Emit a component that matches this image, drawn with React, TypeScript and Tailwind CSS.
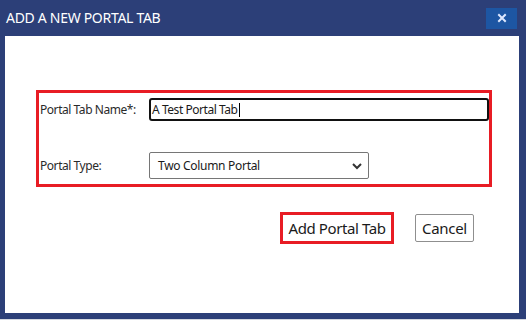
import React from "react";

export default function App() {
  const font = { fontFamily: '"Noto Sans", "Open Sans", sans-serif' };
  return (
    <div className="w-[526px] h-[320px] bg-[#2c3f78] flex flex-col overflow-hidden" style={font}>
      <div className="h-[36px] flex items-center justify-between pl-[6px] pr-[9px] shrink-0">
        <div className="text-white text-[14px] leading-none tracking-[-0.3px]">ADD A NEW PORTAL TAB</div>
        <button className="w-[31px] h-[21px] bg-[#1d56a3] flex items-center justify-center">
          <svg width="10" height="10" viewBox="0 0 10 10">
            <path d="M2 2 L8 8 M8 2 L2 8" stroke="#dfe9ff" strokeWidth="2" strokeLinecap="square" />
          </svg>
        </button>
      </div>
      <div className="flex-1 bg-white ml-[5px] mr-[7px] mb-[6px] flex flex-col pt-[54px]">
        <div className="ml-[31px] w-[456px] h-[97px] border-[3px] border-[#e81c24] pt-[5px] pb-[5px] flex flex-col justify-between">
          <div className="flex items-center h-[23px]">
            <div className="w-[110px] pl-[1px] text-[12px] text-[#2a2a2a] tracking-[-0.45px]">Portal Tab Name*:</div>
            <div className="flex-1 h-[23px] border-2 border-[#111] rounded-[3px] flex items-center pl-[1px]">
              <span className="text-[12px] text-[#1a1a1a] tracking-[-0.45px]">A Test Portal Tab</span>
              <span className="w-[1px] h-[14px] bg-black ml-[1px]" />
            </div>
          </div>
          <div className="flex items-center h-[27px]">
            <div className="w-[110px] pl-[1px] text-[12px] text-[#2a2a2a] tracking-[-0.45px]">Portal Type:</div>
            <div className="w-[220px] h-[27px] border border-[#767676] rounded-[2px] flex items-center justify-between pl-[8px] pr-[5px]">
              <span className="text-[12px] text-[#1a1a1a] tracking-[-0.3px]">Two Column Portal</span>
              <svg width="12" height="8" viewBox="0 0 12 8">
                <path d="M2 2 L6 6 L10 2" stroke="#333" strokeWidth="2" fill="none" />
              </svg>
            </div>
          </div>
        </div>
        <div className="flex items-center justify-end mt-[25px] mr-[45px] gap-[21px]">
          <div className="w-[114px] h-[32px] border-[3px] border-[#e81c24] flex items-center justify-center">
            <span className="text-[15px] text-[#1a1a1a] tracking-[-0.4px]">Add Portal Tab</span>
          </div>
          <div className="w-[59px] h-[28px] border border-[#8f8f8f] rounded-[2px] flex items-center justify-center">
            <span className="text-[15px] text-[#1a1a1a] tracking-[-0.3px]">Cancel</span>
          </div>
        </div>
      </div>
      <div className="h-[1px] bg-[#d4d8e0] shrink-0" />
    </div>
  );
}
